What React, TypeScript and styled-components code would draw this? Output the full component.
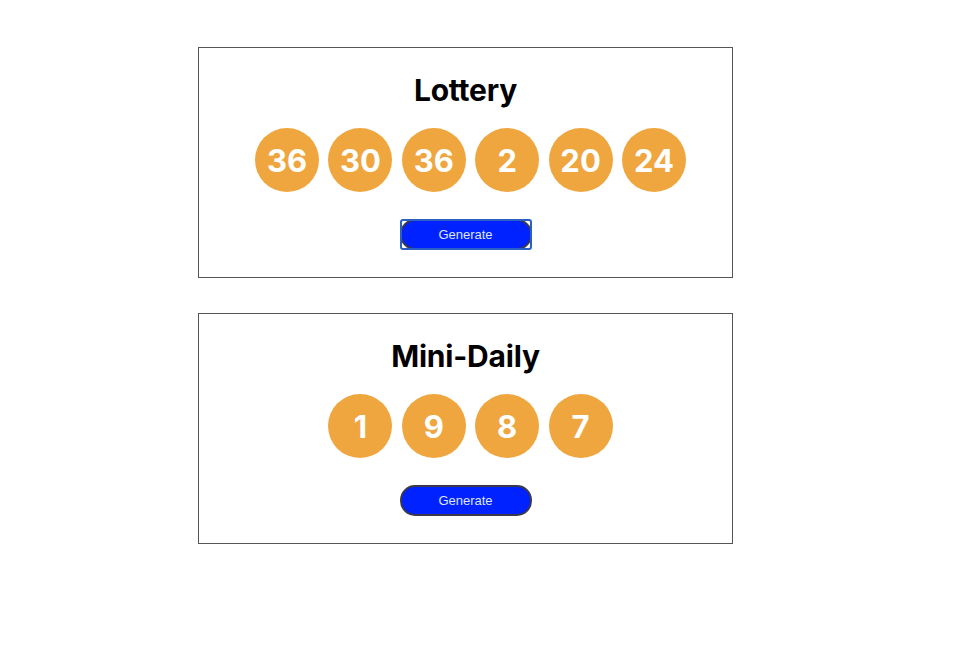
import React from 'react';
import styled, { createGlobalStyle } from 'styled-components';

const GlobalStyle = createGlobalStyle`
    html, body {
        margin: 0;
        padding: 0;
        background: #ffffff;
    }
    body {
        font-family: Inter, "Liberation Sans", sans-serif;
    }
`;

const StyledPage = styled.div`
    padding: 47px 0 0 198px;
    display: flex;
    flex-direction: column;
    gap: 35px;
`;

const Card = styled.section`
    width: 535px;
    box-sizing: border-box;
    border: 1px solid #555555;
    padding: 25px 0 27px;
    display: flex;
    flex-direction: column;
    align-items: center;
`;

const Title = styled.h2`
    margin: 0;
    font-family: Inter, "Liberation Sans", sans-serif;
    font-size: 30px;
    line-height: 34px;
    font-weight: 700;
    letter-spacing: -0.2px;
    color: #000000;
`;

const BallRow = styled.div`
    display: flex;
    gap: 9.4px;
    padding-left: 10px;
    margin-top: 21px;
`;

const Ball = styled.div`
    width: 64px;
    height: 64px;
    border-radius: 50%;
    background: #f0a63f;
    color: #ffffff;
    display: flex;
    align-items: center;
    justify-content: center;
    font-family: Inter, "Liberation Sans", sans-serif;
    font-size: 31px;
    font-weight: 700;
`;

const GenerateButton = styled.button<{ $focused?: boolean }>`
    position: relative;
    margin-top: 27px;
    width: 132px;
    height: 31px;
    box-sizing: border-box;
    border-radius: 15px;
    border: 2px solid #3a3a4a;
    background: #0022ff;
    color: #dfe6ff;
    font-family: "Liberation Sans", Arial, sans-serif;
    font-size: 13px;
    cursor: pointer;
    outline: none;

    /* focus ring drawn square over the pill */
    &::after {
        content: '';
        display: ${(p) => (p.$focused ? 'block' : 'none')};
        position: absolute;
        inset: -2px;
        border: 2px solid #2a5fc4;
        border-radius: 3px;
    }
`;

const games = [
    { name: 'Lottery', numbers: [36, 30, 36, 2, 20, 24], focused: true },
    { name: 'Mini-Daily', numbers: [1, 9, 8, 7], focused: false },
];

export default function App() {
    return (
        <>
            <GlobalStyle />
            <StyledPage>
                {games.map((game) => (
                    <Card key={game.name}>
                        <Title>{game.name}</Title>
                        <BallRow>
                            {game.numbers.map((n, i) => (
                                <Ball key={i}>{n}</Ball>
                            ))}
                        </BallRow>
                        <GenerateButton $focused={game.focused}>Generate</GenerateButton>
                    </Card>
                ))}
            </StyledPage>
        </>
    );
}
